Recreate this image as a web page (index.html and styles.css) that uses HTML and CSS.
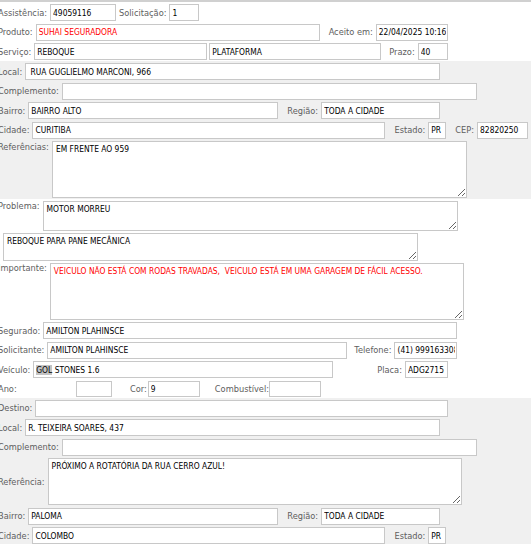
FILE: index.html
```html
<!DOCTYPE html>
<html lang="pt-BR">
<head>
<meta charset="utf-8">
<title>Assistência 49059116</title>
<link rel="stylesheet" href="styles.css">
</head>
<body>
<form class="sheet">
  <div class="block">
    <div class="row">
      <label class="lbl">Assistência:</label><input class="fld w66" value="49059116">
      <label class="lbl ml3">Solicitação:</label><input class="fld w30" value="1">
    </div>
    <div class="row">
      <label class="lbl">Produto:</label><input class="fld w284 red" value="SUHAI SEGURADORA">
      <label class="lbl ml9">Aceito em:</label><input class="fld w72" value="22/04/2025 10:16">
    </div>
    <div class="row">
      <label class="lbl">Serviço:</label><input class="fld w173" value="REBOQUE"><input class="fld w172" value="PLATAFORMA">
      <label class="lbl ml8">Prazo:</label><input class="fld w30" value="40">
    </div>
  </div>

  <div class="block gray">
    <div class="row">
      <label class="lbl">Local:</label><input class="fld w415" value=" RUA GUGLIELMO MARCONI, 966">
    </div>
    <div class="row">
      <label class="lbl">Complemento:</label><input class="fld w415" value="">
    </div>
    <div class="row">
      <label class="lbl">Bairro:</label><input class="fld w250" value="BAIRRO ALTO">
      <label class="lbl ml9">Região:</label><input class="fld w119" value="TODA A CIDADE">
    </div>
    <div class="row">
      <label class="lbl">Cidade:</label><input class="fld w353" value="CURITIBA">
      <label class="lbl ml9">Estado:</label><input class="fld w18" value="PR">
      <label class="lbl ml9">CEP:</label><input class="fld w51" value="82820250">
    </div>
    <div class="row top">
      <label class="lbl down1">Referências:</label><textarea class="fld w415 h57">EM FRENTE AO 959</textarea>
    </div>
  </div>

  <div class="block">
    <div class="row top">
      <label class="lbl">Problema:</label><textarea class="fld w415 h29">MOTOR MORREU</textarea>
    </div>
    <div class="row top">
      <textarea class="fld w415 h27 indent">REBOQUE PARA PANE MECÂNICA</textarea>
    </div>
    <div class="row top">
      <label class="lbl">Importante:</label><textarea class="fld w414 h56 red">VEICULO NÃO ESTÁ COM RODAS TRAVADAS,  VEICULO ESTÁ EM UMA GARAGEM DE FÁCIL ACESSO.</textarea>
    </div>
    <div class="row">
      <label class="lbl">Segurado:</label><input class="fld w414" value="AMILTON PLAHINSCE">
    </div>
    <div class="row">
      <label class="lbl">Solicitante:</label><input class="fld w300" value="AMILTON PLAHINSCE">
      <label class="lbl ml7">Telefone:</label><input class="fld w63" value="(41) 999163308">
    </div>
    <div class="row">
      <label class="lbl">Veículo:</label><div class="fld w300 box"><mark class="sel">GOL</mark>&nbsp;STONES 1.6</div>
      <label class="lbl ml44">Placa:</label><input class="fld w43" value="ADG2715">
    </div>
    <div class="row short">
      <label class="lbl wano">Ano:</label><input class="fld w36" value="">
      <label class="lbl ml18 mr1">Cor:</label><input class="fld w52" value="9">
      <label class="lbl ml15 mr0">Combustível:</label><input class="fld w52" value="">
    </div>
  </div>

  <div class="block gray">
    <div class="row">
      <label class="lbl">Destino:</label><input class="fld w413" value="">
    </div>
    <div class="row">
      <label class="lbl">Local:</label><input class="fld w415" value="R. TEIXEIRA SOARES, 437">
    </div>
    <div class="row">
      <label class="lbl">Complemento:</label><input class="fld w415" value="">
    </div>
    <div class="row mid">
      <label class="lbl">Referência:</label><textarea class="fld w414 h47">PRÓXIMO A ROTATÓRIA DA RUA CERRO AZUL!</textarea>
    </div>
    <div class="row">
      <label class="lbl">Bairro:</label><input class="fld w250" value="PALOMA">
      <label class="lbl ml9">Região:</label><input class="fld w119" value="TODA A CIDADE">
    </div>
    <div class="row">
      <label class="lbl">Cidade:</label><input class="fld w353" value="COLOMBO">
      <label class="lbl ml9">Estado:</label><input class="fld w18" value="PR">
    </div>
  </div>
</form>
</body>
</html>
```

FILE: styles.css
```css
* { box-sizing: border-box; }

html, body {
  margin: 0;
  background: #fff;
  overflow: hidden;
}

body {
  font-family: "DejaVu Sans", Verdana, sans-serif;
  font-size: 8.25px;
  color: #5e5e5e;
}

.sheet {
  margin: 0 0 0 -2px;
  border-top: 2px solid #d0d0d0;
}

.block {
  display: flex;
  flex-direction: column;
  gap: 2.5px;
  padding: 2px 0 1px;
  background: #fff;
}
.block.gray { background: #f0f0f0; }

.row {
  display: flex;
  align-items: center;
  height: 17px;
  flex: none;
}
.row.top { align-items: flex-start; height: auto; }
.row.mid { align-items: center; height: auto; }
.row.short { height: 16px; }
.row.short .fld { height: 16px; }

.lbl {
  margin-right: 3px;
  white-space: nowrap;
  color: #5e5e5e;
  line-height: normal;
}
.down1 { margin-top: 1px; }
.wano { width: 75px; }

.fld {
  height: 17px;
  margin: 0;
  border: 1px solid #c8c8c8;
  border-radius: 0;
  background: #fff;
  color: #000;
  font-family: "DejaVu Sans Condensed", "DejaVu Sans", sans-serif;
  font-stretch: condensed;
  font-size: 8.4px;
  padding: 0 1px 0 2px;
  outline: none;
  flex: none;
}
.fld.red { color: #f00; }

.box {
  display: flex;
  align-items: center;
  white-space: nowrap;
  overflow: hidden;
}
.sel {
  background: #c3c3c3;
  color: #000;
}

textarea.fld {
  display: block;
  padding: 2px 3px;
  line-height: normal;
  resize: both;
  overflow: auto;
}
textarea.indent { margin-left: 5px; }

.fld + .fld { margin-left: 2px; }

.ml3 { margin-left: 3px; }
.ml7 { margin-left: 7px; }
.ml8 { margin-left: 8px; }
.ml9 { margin-left: 9px; }
.ml15 { margin-left: 15px; }
.ml18 { margin-left: 18px; }
.ml44 { margin-left: 44px; }
.mr0 { margin-right: 0; }
.mr1 { margin-right: 1px; }

.w18 { width: 18px; }
.w30 { width: 30px; }
.w36 { width: 36px; }
.w43 { width: 43px; }
.w51 { width: 51px; }
.w52 { width: 52px; }
.w63 { width: 63px; }
.w66 { width: 66px; }
.w72 { width: 72px; }
.w119 { width: 119px; }
.w172 { width: 172px; }
.w173 { width: 173px; }
.w250 { width: 250px; }
.w284 { width: 284px; }
.w300 { width: 300px; }
.w353 { width: 353px; }
.w413 { width: 413px; }
.w414 { width: 414px; }
.w415 { width: 415px; }

.h27 { height: 27.5px; }
.h29 { height: 29.5px; }
.h47 { height: 47px; }
.h56 { height: 56.5px; }
.h57 { height: 57px; }
```
